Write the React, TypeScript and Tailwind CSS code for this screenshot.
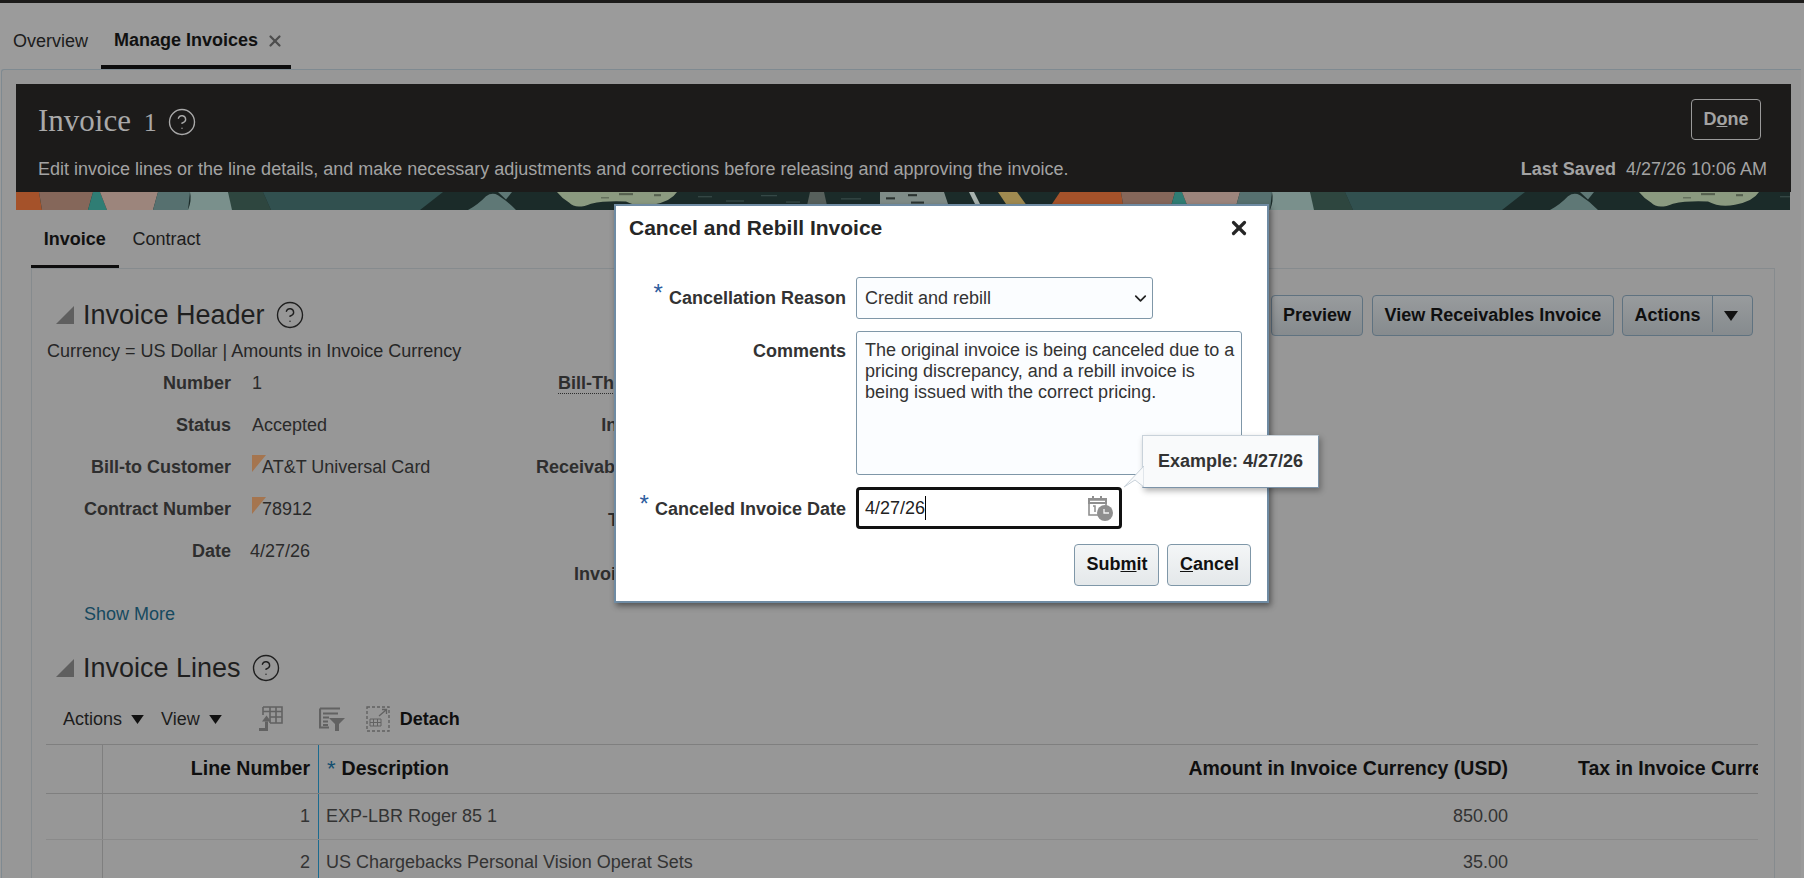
import { ChevronDown, CircleHelp, X } from "lucide-react";

const fieldsLeft = [
  { label: "Number", value: "1" },
  { label: "Status", value: "Accepted" },
  { label: "Bill-to Customer", value: "AT&T Universal Card", marker: true },
  { label: "Contract Number", value: "78912", marker: true },
  { label: "Date", value: "4/27/26" },
];

const BandTile = ({ x }: { x: number }) => (
  <g transform={`translate(${x} 0)`}>
    <rect x="0" y="0" width="1082" height="17" fill="#1b2b29" />
    <polygon points="0,0 23,0 26,17 0,17" fill="#a5522a" />
    <polygon points="23,0 77,0 72,17 26,17" fill="#85675a" />
    <polygon points="77,0 84,0 91,17 72,17" fill="#2f7d74" />
    <polygon points="84,0 142,0 137,17 91,17" fill="#9c857c" />
    <path d="M142 0 H174 L172 17 H137 Z" fill="#56706f" />
    <path d="M174 0 H212 Q218 8 219 17 H172 Q176 8 174 0 Z" fill="#7a908c" />
    <path d="M212 0 H247 L255 17 H216 Z" fill="#2e463f" />
    <polygon points="247,0 427,0 404,17 255,17" fill="#31504f" />
    <path d="M452 17 Q462 12 470 4 Q476 0 482 3 Q492 9 500 17 Z" fill="#5f7876" />
    <polygon points="482,0 496,0 490,7" fill="#5f7876" />
    <path d="M541 0 H661 Q655 9 637 12 Q622 15 610 9 Q590 8 575 11 Q560 17 553 10 Q546 6 541 0 Z" fill="#8b9a80" />
    <rect x="603" y="1" width="14" height="2" fill="#55604f" />
    <rect x="638" y="2" width="7" height="2" fill="#55604f" />
    <rect x="585" y="5" width="8" height="1" fill="#55604f" />
    <rect x="682" y="4" width="14" height="1" fill="#3c4f4d" />
    <rect x="710" y="8" width="18" height="1" fill="#3c4f4d" />
    <rect x="745" y="3" width="16" height="1" fill="#3c4f4d" />
    <rect x="770" y="9" width="14" height="1" fill="#3c4f4d" />
    <polygon points="794,0 808,0 812,17 790,17" fill="#57605c" />
    <rect x="825" y="6" width="20" height="1" fill="#3c4f4d" />
    <polygon points="864,0 928,0 934,17 864,17" fill="#7f8c88" />
    <rect x="870" y="5" width="9" height="2" fill="#2b3331" />
    <rect x="892" y="2" width="9" height="2" fill="#2b3331" />
    <rect x="895" y="9" width="13" height="2" fill="#2b3331" />
    <polygon points="953,0 958,0 967,17 962,17" fill="#a8b2ae" />
    <polygon points="982,0 1001,0 1014,17 994,17" fill="#a08a50" />
    <polygon points="1044,0 1082,0 1082,17 1032,17" fill="#a5522a" />
  </g>
);

const HelpIcon = ({ className }: { className: string }) => (
  <CircleHelp className={className} strokeWidth={1.1} />
);

const SectionTitle = ({ title }: { title: string }) => (
  <div className="flex items-center pb-[2px]">
    <svg className="ml-[24px] h-[18px] w-[18px]" viewBox="0 0 18 18">
      <polygon points="18,0 18,18 0,18" fill="#5f5f5f" />
    </svg>
    <span className="ml-[9px] text-[27px] leading-[32px] text-[#1f1f1f]">{title}</span>
    <HelpIcon className="ml-[10px] h-[30px] w-[30px] text-[#1f1f1f]" />
  </div>
);

const DownArrow = ({ className }: { className: string }) => (
  <svg className={className} viewBox="0 0 14 10">
    <polygon points="0,0 14,0 7,10" fill="#111111" />
  </svg>
);

const App = () => {
  return (
    <div className="relative h-[878px] w-[1804px] overflow-hidden bg-[#9b9b9b] font-['Liberation_Sans',Arial,sans-serif] text-[18px] text-[#2a2a2a]">
      <div className="h-[3px] bg-[#1c1b1a]" />

      {/* Top tabs */}
      <div className="relative z-10 flex h-[66px] items-end">
        <div className="flex h-[66px] items-center pl-[13px] pr-[13px] pt-[10px] text-[#1c1c1c]">Overview</div>
        <div className="flex h-[66px] w-[190px] items-center border-b-[4px] border-[#0d0d0d] pl-[13px] pt-[12px] font-bold text-[#111111]">
          Manage Invoices
          <X className="ml-[8px] mt-[2px] h-[18px] w-[18px] text-[#4d4d4d]" strokeWidth={3} />
        </div>
      </div>

      {/* Main panel */}
      <div className="ml-px mr-[3px] h-[809px] rounded-tl-[3px] border-l border-t border-[#7f8a91] bg-[#979797] pl-[14px] pr-[10px] pt-[14px]">
        <div className="h-[108px] bg-[#1c1b1a] pl-[22px] pr-[24px] pt-[15px] text-[#a3a3a3]">
          <div className="flex h-[41px] items-start justify-between">
            <div className="flex items-center pt-[3px]">
              <span className="font-['Liberation_Serif',serif] text-[31px] leading-[38px] text-[#a9a9a9]">
                Invoice <span className="ml-[5px] text-[26px]">1</span>
              </span>
              <HelpIcon className="ml-[10px] h-[30px] w-[30px] text-[#a9a9a9]" />
            </div>
            <div className="mr-[6px] flex h-[41px] w-[70px] items-center justify-center rounded-[4px] border border-[#9a9a9a] pb-px font-bold">
              <span>
                D<span className="underline">o</span>ne
              </span>
            </div>
          </div>
          <div className="mt-[16px] flex items-center justify-between">
            <span>Edit invoice lines or the line details, and make necessary adjustments and corrections before releasing and approving the invoice.</span>
            <span>
              <span className="font-bold">Last Saved</span>
              <span className="ml-[10px]">4/27/26 10:06 AM</span>
            </span>
          </div>
        </div>
        <svg className="block h-[18px] w-[1774px]" viewBox="0 0 1774 17" preserveAspectRatio="none">
          <BandTile x={0} />
          <BandTile x={1082} />
        </svg>

        {/* Sub tabs */}
        <div className="flex h-[59px] pl-[15px]">
          <div className="flex h-[59px] w-[87.5px] items-center justify-center border-b-[4px] border-[#0d0d0d] pt-[4px] font-bold text-[#111111]">Invoice</div>
          <div className="flex h-[55px] items-center pl-[14px] pt-[4px] text-[#1c1c1c]">Contract</div>
        </div>

        {/* Inner panel */}
        <div className="ml-[15px] h-[640px] w-[1744px] -translate-y-px border-l border-r border-t border-[#868b8e] pt-[26px]">
          <div className="flex h-[41px] items-center justify-between">
            <SectionTitle title="Invoice Header" />
            <div className="mr-[21px] flex gap-[8px] font-bold text-[#0f0f0f]">
              <div className="mr-px flex h-[41px] w-[92px] items-center justify-center rounded-[4px] border border-[#5f7280] bg-gradient-to-b from-[#989b9d] to-[#868b8e]">Preview</div>
              <div className="flex h-[41px] w-[242px] items-center justify-center rounded-[4px] border border-[#5f7280] bg-gradient-to-b from-[#989b9d] to-[#868b8e]">View Receivables Invoice</div>
              <div className="flex h-[41px] w-[131px] items-center rounded-[4px] border border-[#5f7280] bg-gradient-to-b from-[#989b9d] to-[#868b8e]">
                <span className="w-[89px] py-[3px] text-center">Actions</span>
                <span className="h-[36px] w-px self-start bg-[#5f7280]" />
                <DownArrow className="ml-[11px] h-[10px] w-[14px]" />
              </div>
            </div>
          </div>

          <div className="pl-[15px] pt-[2px] text-[18px] leading-[26px] text-[#262626]">Currency = US Dollar | Amounts in Invoice Currency</div>

          <div className="mt-[-2px] flex h-[210px]">
            <div className="w-[200px] shrink-0">
              {fieldsLeft.map((f) => (
                <div key={f.label} className="flex h-[42px] w-[460px] items-center">
                  <span className="w-[199px] text-right font-bold text-[#2e2e2e]">{f.label}</span>
                  {f.marker ? (
                    <span className="relative ml-[21px] pl-[10px]">
                      <span className="absolute left-0 top-[1px] h-0 w-0 border-r-[14px] border-t-[17px] border-r-transparent border-t-[#a5754f]" />
                      {f.value}
                    </span>
                  ) : (
                    <span className={f.label === "Date" ? "ml-[19px]" : "ml-[21px]"}>{f.value}</span>
                  )}
                </div>
              ))}
            </div>
            <div className="ml-[270px] flex w-[207px] flex-col text-right font-bold text-[#2e2e2e]">
              <div className="flex h-[42px] shrink-0 items-center justify-end">
                <span className="border-b border-dotted border-[#2e2e2e] leading-[20px]">Bill-Through Date</span>
              </div>
              <div className="flex h-[42px] shrink-0 items-center justify-end">Invoice Type</div>
              <div className="flex h-[42px] shrink-0 items-center justify-end">Receivables Method</div>
              <div className="flex h-[64px] shrink-0 items-center justify-end">Transaction</div>
              <div className="flex h-[44px] shrink-0 items-center justify-end">Invoice Number</div>
            </div>
          </div>

          <div className="pl-[52px] pt-[30px] leading-[24px] text-[#16495f]">Show More</div>

          <div className="pt-[26px]">
            <SectionTitle title="Invoice Lines" />
          </div>

          {/* Toolbar */}
          <div className="mt-[5px] flex h-[51px] items-center pl-[31px] pt-[5px] text-[#1c1c1c]">
            <span>Actions</span>
            <DownArrow className="ml-[9px] h-[9px] w-[13px]" />
            <span className="ml-[17px]">View</span>
            <DownArrow className="ml-[9px] h-[9px] w-[13px]" />
            <svg className="ml-[37px] h-[26px] w-[24px]" viewBox="0 0 24 26" fill="none" stroke="#626262">
              <path d="M4 1h19v16H11M4 1v8M4 5.500h19M11 1v16M17 1v16M11 11h12" strokeWidth="1.6" />
              <path d="M0 23.500h7.500v-8" strokeWidth="3" />
              <polygon points="7.500,9.500 12,15.500 3,15.500" fill="#626262" stroke="none" />
            </svg>
            <svg className="ml-[36px] h-[24px] w-[26px]" viewBox="0 0 26 24" fill="none" stroke="#626262">
              <path d="M1 1.500h20M1 1.500v19h9" strokeWidth="2.2" />
              <path d="M4 6.500h15M4 10.500h6M4 14.500h5M4 18h5" strokeWidth="1.8" />
              <polygon points="10,11 26,11 20,17 20,24 16,24 16,17" fill="#626262" stroke="none" />
            </svg>
            <svg className="ml-[21px] h-[26px] w-[24px]" viewBox="0 0 24 26" fill="none" stroke="#626262">
              <rect x="1" y="1" width="22" height="24" strokeDasharray="3 2" strokeWidth="1.4" />
              <path d="M4 13h11v7H4zM4 16.500h11M7.500 13v7M11.500 13v7" strokeWidth="1" />
              <path d="M13 10l7-6M16 3.500h4.500v4.500" strokeWidth="1.3" />
            </svg>
            <span className="ml-[10px] font-bold text-[#0f0f0f]">Detach</span>
          </div>

          {/* Table */}
          <div className="ml-[14px] mt-[2px] w-[1712px] overflow-hidden border-t border-[#7f7f7f]">
            <div className="grid h-[49px] grid-cols-[57px_216px_1fr_400px_238px] items-center border-b border-[#7f7f7f] text-[19.5px] font-bold text-[#0f0f0f]">
              <div className="h-full border-r border-[#7f7f7f]" />
              <div className="flex h-full items-center justify-end border-r border-[#1a6a8f] pr-[8px]">Line Number</div>
              <div className="flex items-center pl-[8px]">
                <span className="text-[22px] font-normal leading-none text-[#134e6f]">*</span>
                <span className="ml-[6px]">Description</span>
              </div>
              <div className="pr-[12px] text-right">Amount in Invoice Currency (USD)</div>
              <div className="overflow-hidden whitespace-nowrap pl-[58px]">Tax in Invoice Currency (USD)</div>
            </div>
            {[
              { n: 1, d: "EXP-LBR Roger 85 1", a: "850.00" },
              { n: 2, d: "US Chargebacks Personal Vision Operat Sets", a: "35.00" },
            ].map((r) => (
              <div key={r.n} className="grid h-[46px] grid-cols-[57px_216px_1fr_400px_238px] items-center border-b border-[#8a8a8a] text-[#333333]">
                <div className="h-full border-r border-[#7f7f7f]" />
                <div className="flex h-full items-center justify-end border-r border-[#1a6a8f] pr-[8px]">{r.n}</div>
                <div className="pl-[7px]">{r.d}</div>
                <div className="pr-[12px] text-right">{r.a}</div>
                <div />
              </div>
            ))}
          </div>
        </div>
      </div>

      {/* Modal dialog */}
      <div className="absolute left-[614px] top-[204px] z-20 h-[399px] w-[655px] border-2 border-[#6f8ba3] bg-white pl-px pt-px shadow-[2px_3px_6px_rgba(0,0,0,0.45)]">
        <div className="flex h-[42px] items-center justify-between pl-[12px] pr-[17px] text-[21px] font-bold text-[#262626]">
          Cancel and Rebill Invoice
          <X className="h-[22px] w-[22px] text-[#262626]" strokeWidth={3.5} />
        </div>

        <div className="mt-[28px] flex h-[42px] items-center">
          <div className="w-[229px] pb-[3px] text-right font-bold text-[#333333]">
            <span className="mr-[6px] align-[3px] text-[24px] font-normal leading-none text-[#2c5c9e]">*</span>
            Cancellation Reason
          </div>
          <div className="ml-[10px] flex h-[42px] w-[297px] items-center justify-between rounded-[3px] border border-[#7f97a8] bg-[#fbfdff] pl-[8px] pr-[2px] text-[#333333]">
            Credit and rebill
            <ChevronDown className="h-[19px] w-[19px] text-[#222222]" strokeWidth={2.2} />
          </div>
        </div>

        <div className="mt-[12px] flex">
          <div className="w-[229px] pt-[10px] text-right font-bold leading-[21px] text-[#333333]">Comments</div>
          <div className="ml-[10px] h-[144px] w-[386px] rounded-[3px] border border-[#7f97a8] bg-[#fbfdff] pl-[8px] pr-[5px] pt-[8px] leading-[21px] text-[#333333]">
            The original invoice is being canceled due to a pricing discrepancy, and a rebill invoice is being issued with the correct pricing.
          </div>
        </div>

        <div className="mt-[12px] flex h-[42px] items-center">
          <div className="w-[229px] pb-[2px] text-right font-bold text-[#333333]">
            <span className="mr-[6px] align-[3px] text-[24px] font-normal leading-none text-[#2c5c9e]">*</span>
            Canceled Invoice Date
          </div>
          <div className="ml-[10px] flex h-[42px] w-[266px] items-center justify-between rounded-[4px] border-[3px] border-[#111111] bg-white pl-[6px] pr-[6px] text-[#222222]">
            <span className="border-r border-black leading-[24px]">4/27/26</span>
            <svg className="h-[25px] w-[25px]" viewBox="0 0 25 25" fill="none">
              <path d="M1 4h17v15H1z" stroke="#8f8f8f" strokeWidth="1.6" />
              <path d="M1 3h17v4H1zM5 0v4M13 0v4" stroke="#8f8f8f" strokeWidth="2" />
              <path d="M5 10h2v6" stroke="#8f8f8f" strokeWidth="1.5" />
              <circle cx="17" cy="17" r="8" fill="#8f8f8f" />
              <path d="M16 13v4h5" stroke="#f4f4f4" strokeWidth="1.3" />
            </svg>
          </div>
        </div>

        <div className="mr-[16px] mt-[15px] flex justify-end gap-[8px] font-bold text-[#111111]">
          <div className="flex h-[42px] w-[85px] items-center justify-center rounded-[4px] border border-[#7f97a8] bg-gradient-to-b from-[#f4f6f7] to-[#e4e8ea] pb-px pl-px">
            <span>
              Sub<span className="underline">m</span>it
            </span>
          </div>
          <div className="flex h-[42px] w-[84px] items-center justify-center rounded-[4px] border border-[#7f97a8] bg-gradient-to-b from-[#f4f6f7] to-[#e4e8ea] pb-px pl-px">
            <span>
              <span className="underline">C</span>ancel
            </span>
          </div>
        </div>
      </div>

      {/* Date hint tooltip */}
      <div className="absolute left-[1142px] top-[435px] z-30 flex h-[53px] w-[177px] items-center justify-center border border-[#c9d2da] border-b-[#7c93a8] border-r-[#7c93a8] bg-[#f9fafb] font-bold text-[#333333] shadow-[2px_3px_6px_rgba(0,0,0,0.3)]">
        Example: 4/27/26
        <svg className="absolute left-[-20px] top-[30px] h-[22px] w-[21px]" viewBox="0 0 21 22">
          <polygon points="21,0 1,21 12,14 21,21" fill="#f9fafb" stroke="#c9d2da" strokeWidth="1" />
        </svg>
      </div>
    </div>
  );
};

export default App;
